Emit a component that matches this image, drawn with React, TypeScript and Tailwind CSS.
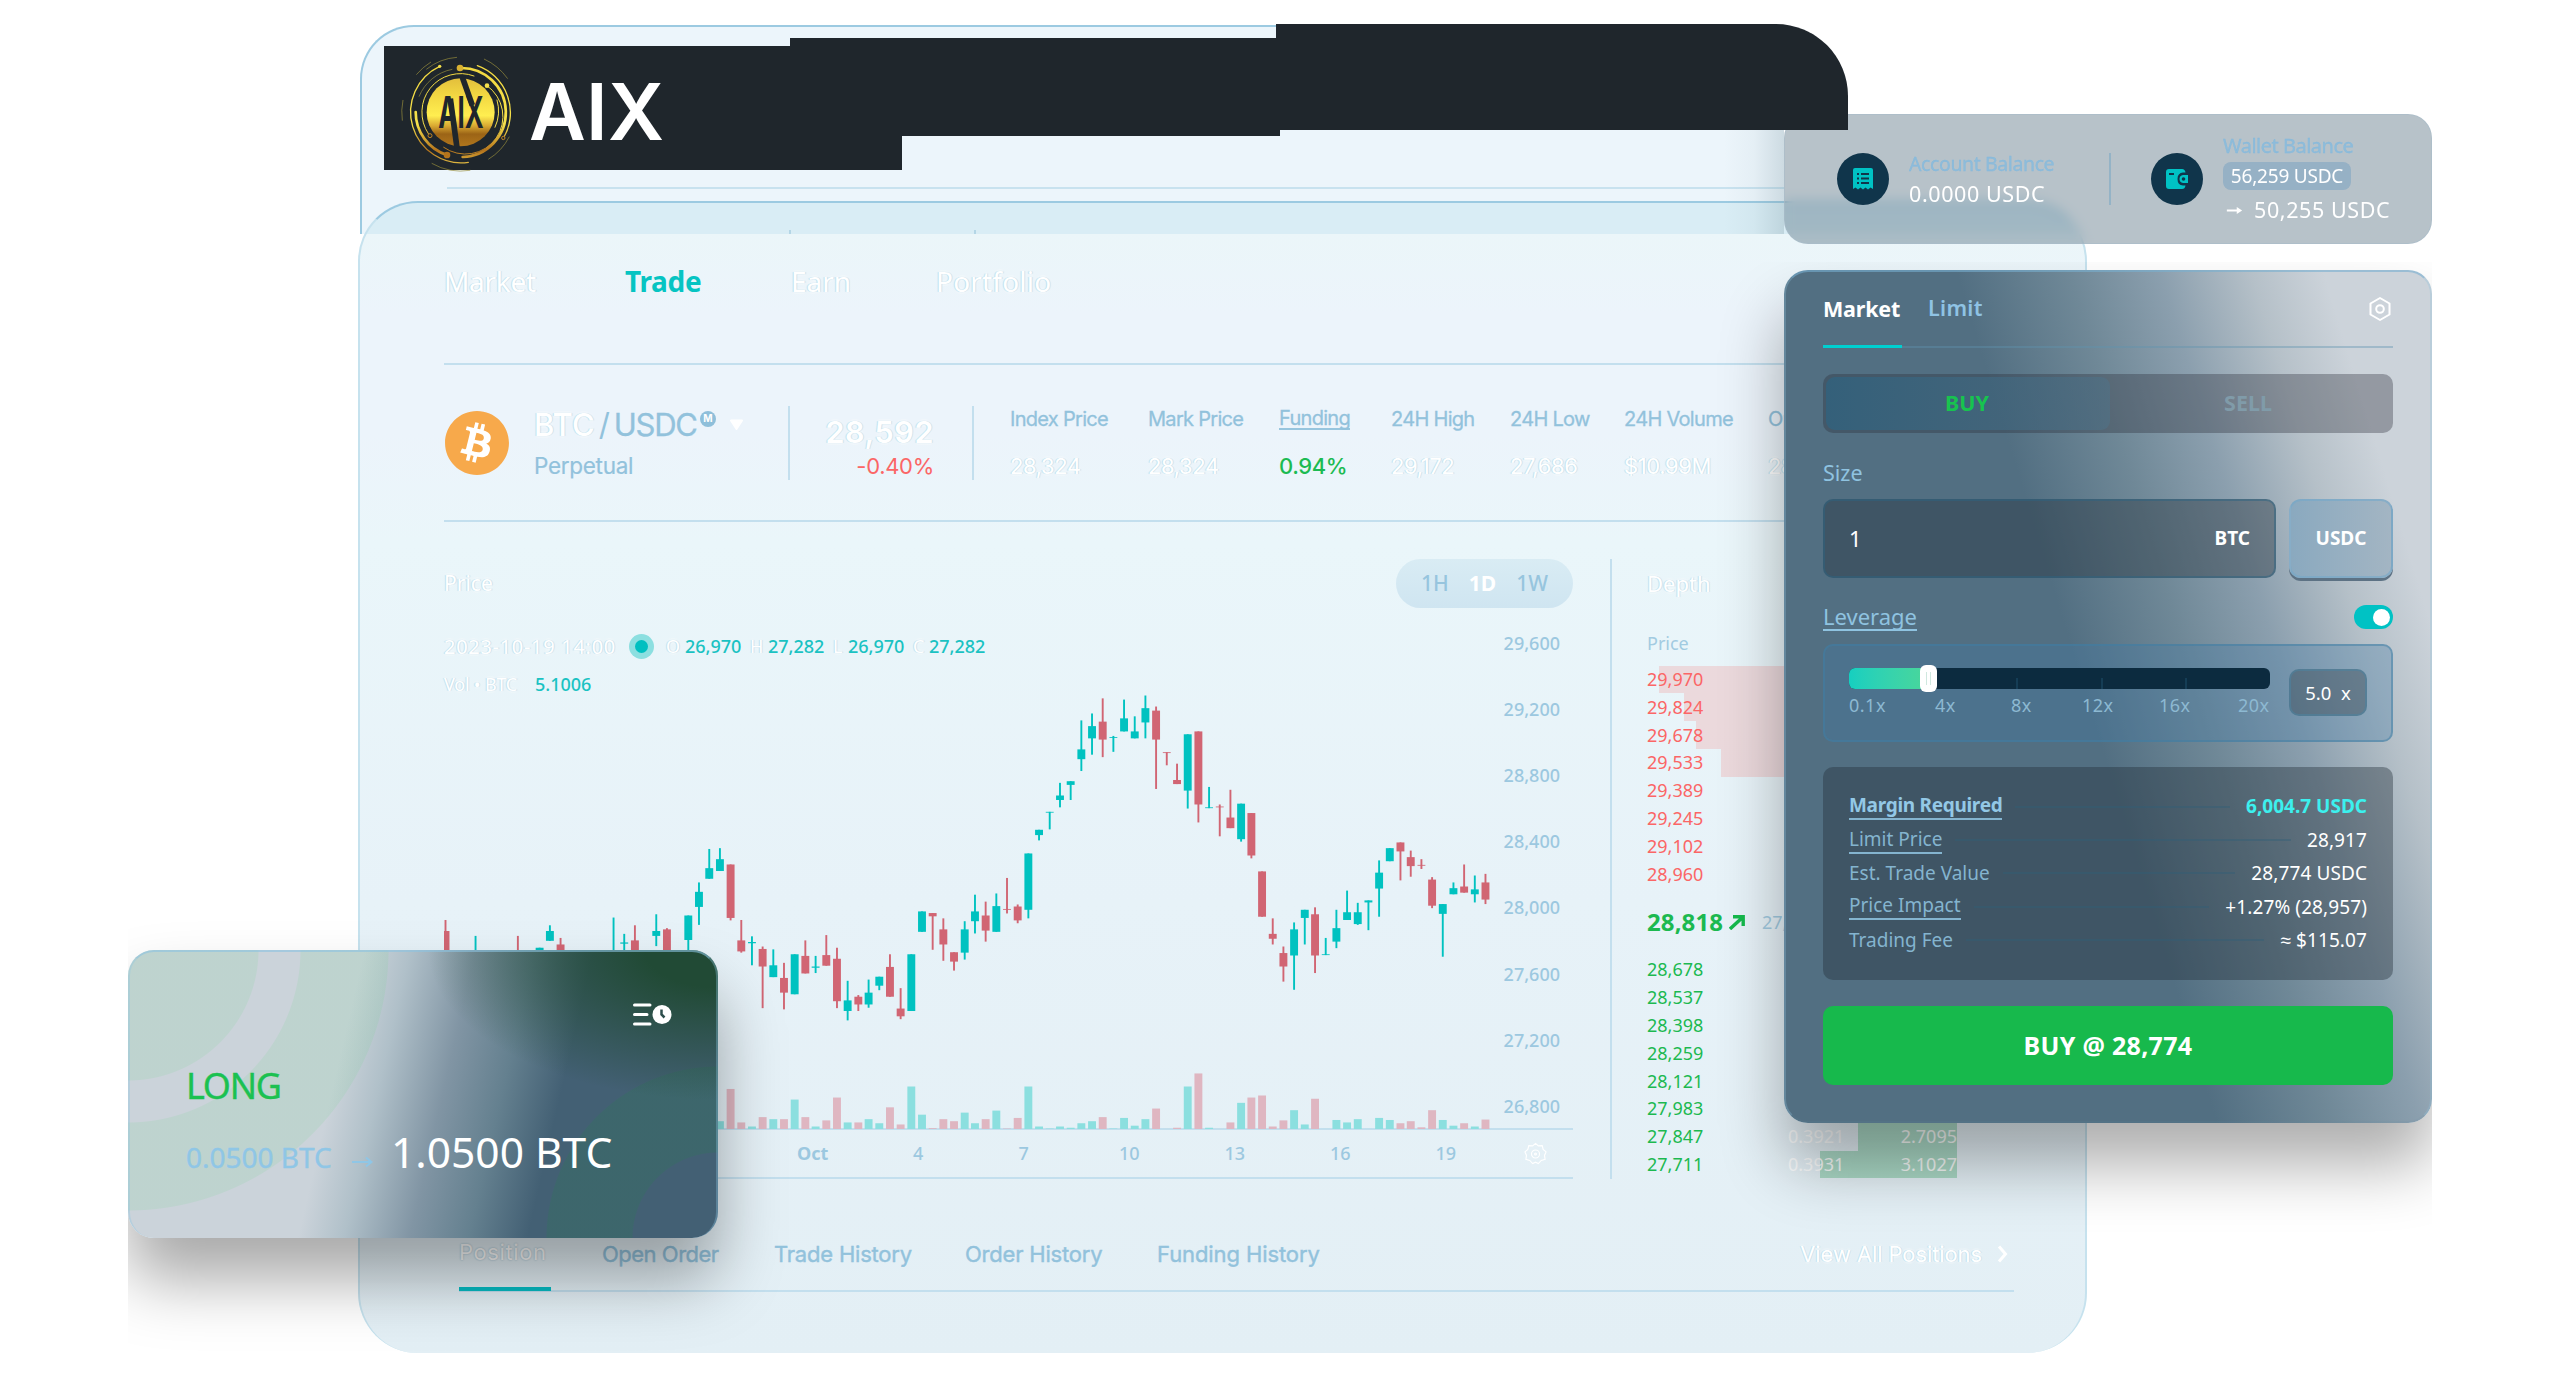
import React from "react";
import { FaBitcoin } from "react-icons/fa";

const ghost = "text-white [text-shadow:1px_0_1px_#c0deeb,-1px_0_1px_#c0deeb,0_0_3px_#ffffff,0_0_3px_#ffffff]";

/* x, high, body top, body bottom, low, rising, volume top */
const CANDLES: [number, number, number, number, number, 0 | 1, number][] = [
  [67, 931, 958, 1040, 1040, 0, 1445], [143, 970, 1008, 1020, 1020, 1, 1445], [250, 970, 1008, 1020, 1020, 0, 1445],
  [305, 999, 999, 1020, 1020, 1, 1445], [331, 944, 958, 982, 982, 1, 1445], [358, 975, 991, 1020, 1020, 0, 1445],
  [492, 925, 1008, 1020, 1020, 1, 1445], [519, 965, 986, 989, 1010, 1, 1445], [546, 944, 981, 1020, 1020, 0, 1445],
  [600, 917, 958, 970, 995, 1, 1445], [627, 951, 954, 1020, 1020, 0, 1445], [681, 920, 920, 980, 1020, 1, 1445],
  [708, 839, 862, 899, 943, 1, 1445], [734, 757, 804, 830, 830, 1, 1445], [761, 755, 782, 811, 811, 1, 1424],
  [788, 795, 795, 926, 932, 0, 1345], [815, 931, 981, 1008, 1011, 0, 1427], [842, 971, 985, 988, 1042, 1, 1437],
  [869, 996, 1002, 1045, 1147, 0, 1414], [896, 1003, 1042, 1071, 1071, 1, 1419], [923, 1036, 1073, 1109, 1150, 0, 1419],
  [950, 1015, 1015, 1113, 1113, 1, 1371], [977, 981, 1019, 1062, 1062, 0, 1414], [1003, 1019, 1045, 1048, 1061, 1, 1437],
  [1030, 968, 1017, 1043, 1043, 0, 1422], [1057, 999, 1026, 1130, 1147, 0, 1366], [1084, 1080, 1128, 1154, 1177, 1, 1427],
  [1111, 1115, 1119, 1138, 1154, 0, 1427], [1137, 1077, 1109, 1138, 1146, 1, 1419], [1164, 1070, 1070, 1092, 1103, 1, 1429],
  [1191, 1015, 1046, 1119, 1119, 0, 1390], [1218, 1098, 1148, 1167, 1174, 0, 1432], [1245, 1015, 1015, 1154, 1154, 1, 1339],
  [1272, 910, 910, 960, 960, 1, 1408], [1299, 914, 914, 922, 1004, 0, 1441], [1326, 927, 954, 991, 1031, 0, 1419],
  [1353, 1010, 1010, 1033, 1055, 0, 1424], [1380, 934, 954, 1011, 1028, 1, 1403], [1406, 869, 910, 934, 964, 1, 1429],
  [1433, 886, 920, 957, 984, 0, 1419], [1460, 866, 897, 960, 960, 1, 1398], [1487, 828, 904, 906, 915, 0, 1442],
  [1514, 893, 898, 932, 939, 0, 1416], [1541, 768, 768, 906, 927, 1, 1339], [1568, 710, 710, 723, 736, 1, 1437],
  [1595, 666, 666, 668, 709, 1, 1442], [1621, 595, 626, 637, 655, 1, 1437], [1648, 591, 591, 600, 637, 1, 1440],
  [1675, 442, 513, 537, 566, 1, 1429], [1702, 425, 456, 486, 526, 1, 1424], [1729, 388, 445, 489, 532, 0, 1414],
  [1756, 480, 483, 485, 519, 1, 1442], [1783, 391, 437, 469, 469, 1, 1416], [1810, 432, 469, 486, 486, 1, 1435],
  [1837, 381, 412, 447, 486, 1, 1419], [1864, 408, 418, 489, 610, 0, 1393], [1891, 520, 520, 522, 552, 0, 1443],
  [1917, 548, 588, 598, 598, 0, 1440], [1944, 476, 476, 614, 658, 1, 1339], [1971, 469, 469, 648, 692, 0, 1307],
  [1998, 605, 655, 657, 657, 1, 1440], [2025, 648, 653, 655, 726, 0, 1443], [2052, 612, 680, 706, 706, 0, 1427],
  [2079, 646, 646, 733, 739, 1, 1379], [2105, 669, 669, 773, 780, 0, 1366], [2132, 812, 812, 923, 923, 0, 1361],
  [2159, 927, 965, 977, 991, 0, 1437], [2186, 996, 1012, 1045, 1082, 0, 1422], [2213, 937, 954, 1018, 1102, 1, 1397],
  [2240, 906, 906, 926, 991, 1, 1432], [2266, 900, 917, 1018, 1061, 0, 1369], [2293, 975, 1015, 1017, 1017, 1, 1443],
  [2320, 906, 951, 984, 1000, 1, 1421], [2347, 859, 912, 931, 931, 1, 1427], [2374, 889, 912, 941, 943, 1, 1419],
  [2401, 883, 883, 888, 956, 1, 1443], [2428, 785, 815, 854, 923, 1, 1416], [2455, 755, 755, 787, 787, 1, 1421],
  [2482, 741, 741, 763, 834, 0, 1429], [2508, 761, 777, 799, 825, 0, 1424], [2535, 782, 796, 798, 806, 0, 1439],
  [2562, 826, 832, 896, 902, 0, 1397], [2589, 892, 892, 916, 1021, 1, 1421], [2616, 839, 853, 868, 868, 1, 1435],
  [2643, 795, 849, 864, 864, 0, 1429], [2670, 822, 856, 868, 888, 1, 1437], [2697, 818, 839, 881, 892, 0, 1420],
];

function Candles() {
  return (
    <svg className="absolute left-0 top-0 h-[521px] w-[1055px]" viewBox="63.2 166.6 2668 1276.5" preserveAspectRatio="none">
      {CANDLES.map(([x, hi, top, bot, lo, up, vol]) => (
        <g key={x} fill={up ? "#00c2c0" : "#d16573"}>
          <rect x={x - 2.4} y={hi} width={4.8} height={lo - hi} />
          <rect x={x - 10} y={top} width={20} height={bot - top} />
          <rect x={x - 10} y={vol} width={20} height={1445 - vol} fill={up ? "#8bdfdf" : "#dfb6c1"} />
        </g>
      ))}
    </svg>
  );
}

function Coin() {
  return (
    <svg className="absolute left-[395px] top-[40px] h-[133.3px] w-[120px]" viewBox="0 0 360 400" fill="none">
      <defs>
        <linearGradient id="gold" x1="0" y1="0" x2="0" y2="1">
          <stop offset="0" stopColor="#e3bf3c" />
          <stop offset=".25" stopColor="#f2d742" />
          <stop offset=".55" stopColor="#ffee50" />
          <stop offset=".7" stopColor="#d9a832" />
          <stop offset=".82" stopColor="#9c6416" />
          <stop offset="1" stopColor="#b0761d" />
        </linearGradient>
        <linearGradient id="ring" gradientUnits="userSpaceOnUse" x1="0" y1="60" x2="0" y2="380">
          <stop offset="0" stopColor="#f3d93f" />
          <stop offset=".6" stopColor="#f6e14c" />
          <stop offset=".85" stopColor="#b5741c" />
          <stop offset="1" stopColor="#e9c94a" />
        </linearGradient>
      </defs>
      <circle cx="197" cy="217" r="102" fill="url(#gold)" />
      <g stroke="#1f262c" strokeWidth="17">
        <path d="M202 112 232 196" />
        <path d="M166 176 186 324" />
      </g>
      <text x="130" y="264" textLength="136" lengthAdjust="spacingAndGlyphs" fill="#1f262c" fontFamily="Inter, sans-serif" fontWeight="700" fontSize="132">AIX</text>
      <g stroke="url(#ring)" strokeLinecap="round">
        <path d="M237 108A116 116 0 0 0 100 281" strokeWidth="3" />
        <path d="M276 137A112 112 0 0 1 146 322" strokeWidth="3" />
        <path d="M134 79A152 152 0 0 0 220 367" strokeWidth="4" />
        <path d="M247 77A150 150 0 0 1 325 295" strokeWidth="4" />
        <path d="M195 84A133 133 0 0 1 203 351" strokeWidth="8" />
        <path d="M62 216A135 135 0 0 0 156 345" strokeWidth="8" />
        <path d="M306 180A116 116 0 0 1 300 262" strokeWidth="3" />
      </g>
      <g stroke="#9a8f3c" strokeWidth="2">
        <path d="M94 88A165 165 0 0 1 186 52" />
        <path d="M64 104A175 175 0 0 1 108 66" />
        <path d="M267 57A180 180 0 0 1 338 116" />
        <path d="M24 180A180 180 0 0 0 22 242" />
        <path d="M343 290A170 170 0 0 1 280 358" />
        <path d="M110 370A176 176 0 0 0 226 391" />
        <path d="M72 170A135 135 0 0 1 172 88" />
      </g>
      <circle cx="195" cy="84" r="10" fill="#d9b233" />
      <circle cx="156" cy="345" r="10" fill="#b5741c" />
      <circle cx="134" cy="79" r="5" fill="#f6e14c" />
      <circle cx="276" cy="137" r="7" fill="#f6e14c" />
      <circle cx="105" cy="287" r="6" stroke="#c08425" strokeWidth="3" fill="#1f262c" />
      <circle cx="325" cy="294" r="5" stroke="#c08425" strokeWidth="3" fill="#1f262c" />
    </svg>
  );
}

function Header() {
  return (
    <>
      <div className="absolute left-[384px] top-[46px] h-[124px] w-[518px] bg-[#1f262c]" />
      <div className="absolute left-[790px] top-[38px] h-[98px] w-[490px] bg-[#1f262c]" />
      <div className="absolute left-[1276px] top-[24px] h-[106px] w-[572px] rounded-tr-[72px] bg-[#1f262c]" />
      <Coin />
      <div className="absolute left-[529px] top-[67px] flex h-[88px] items-center font-[Inter] text-[78px] font-semibold tracking-[0.3px] text-white">AIX</div>
    </>
  );
}

function Stat({ label, value, w, tone, under }: { label: string; value: string; w: string; tone?: string; under?: boolean }) {
  return (
    <div className={`${w} flex flex-none flex-col`}>
      <div className="flex h-[47px] items-center text-[20px] tracking-[-0.7px] text-[#92c2dc] [-webkit-text-stroke:0.3px_#92c2dc]">
        <span className={under ? "border-b-2 border-[#97c5de] leading-[20px]" : "leading-[20px]"}>{label}</span>
      </div>
      <div className={`flex h-[47px] items-center text-[22px] tracking-[-0.4px] ${tone ?? ghost}`}>{value}</div>
    </div>
  );
}

function Ticker() {
  return (
    <div className="flex h-[157px] items-center border-b-2 border-[#c3dfee] font-[Inter]">
      <div className="h-[66px] w-[66px] flex-none rounded-full bg-[radial-gradient(circle,white_60%,transparent_62%)]">
        <FaBitcoin className="h-[66px] w-[66px] text-[#f7a94b]" />
      </div>
      <div className="ml-[24px] flex w-[254px] flex-none flex-col">
        <div className="flex h-[47px] items-center pt-[12px] text-[31px] tracking-[-1.2px]">
          <span className={`${ghost} font-medium tracking-[0px]`}>BTC</span>
          <span className="ml-[4px] mr-[5px] text-[#92c2dc]">/</span>
          <span className="text-[#92c2dc] [-webkit-text-stroke:0.3px_#92c2dc]">USDC</span>
          <span className="mb-[13px] ml-[3px] flex h-4 w-4 items-center justify-center rounded-full bg-[#8fbfda] text-[10px] font-bold tracking-normal text-white">M</span>
          <svg className="ml-[13px] h-[12px] w-[15px]" viewBox="0 0 15 12"><path d="M2 1.5H13L7.5 10Z" fill="#fff" stroke="#fff" strokeWidth="2" strokeLinejoin="round" /></svg>
        </div>
        <div className="flex h-[47px] items-center text-[22.5px] tracking-[-0.3px] text-[#92c2dc] [-webkit-text-stroke:0.2px_#92c2dc]">Perpetual</div>
      </div>
      <div className="flex h-[74px] w-[186px] flex-none flex-col items-end justify-center border-x-2 border-[#c3dfee] pr-[38px]">
        <div className={`flex h-[47px] items-center pt-[12px] text-[30.5px] font-semibold tracking-[0.6px] ${ghost}`}>28,592</div>
        <div className="flex h-[47px] items-center text-[22px] tracking-[-0.3px] text-[#fb6666]">-0.40%</div>
      </div>
      <div className="ml-[36px] flex">
        <Stat label="Index Price" value="28,324" w="w-[138px]" />
        <Stat label="Mark Price" value="28,324" w="w-[131px]" />
        <Stat label="Funding" value="0.94%" w="w-[112px]" tone="font-medium text-[#1cbb52]" under />
        <Stat label="24H High" value="29,172" w="w-[119px]" />
        <Stat label="24H Low" value="27,686" w="w-[114px]" />
        <Stat label="24H Volume" value="$10.99M" w="w-[144px]" />
        <Stat label="Open" value="28,10" w="w-[60px]" />
      </div>
    </div>
  );
}

function Chart() {
  const prices = ["29,600", "29,200", "28,800", "28,400", "28,000", "27,600", "27,200", "26,800"];
  return (
    <div className="flex w-[1129px] flex-none flex-col">
      <div className="flex h-[49px] items-center justify-between">
        <span className={`text-[21px] ${ghost}`}>Price</span>
        <div className="flex h-[49px] w-[177px] items-center justify-between rounded-full bg-linear-to-b from-[#d9ecf4] to-[#cfe5f1] pl-[25px] pr-[25px] text-[21px] font-medium text-[#97c5de]">
          <span>1H</span>
          <span className="font-bold text-white">1D</span>
          <span>1W</span>
        </div>
      </div>
      <div className="relative flex h-[522px] justify-between border-b-2 border-[#c3dfee]">
        <Candles />
        <div className="mt-[19px] flex flex-col text-[18px]">
          <div className="flex h-[39px] items-center">
            <span className={`w-[185px] text-[20px] tracking-[0.7px] ${ghost}`}>2023-10-19 14:00</span>
            <span className="flex h-[25px] w-[25px] items-center justify-center rounded-full bg-[#8cdfe0]"><span className="h-[13px] w-[13px] rounded-full bg-[#00bfc0]" /></span>
            {[["O", "26,970", "w-[19px]"], ["H", "27,282", "w-[18px]"], ["L", "26,970", "w-[15px]"], ["C", "27,282", "w-[16px]"]].map(([k, v, w], i) => (
              <span key={k} className={i ? "ml-[9px] flex" : "ml-[12px] flex"}>
                <span className={`${w} ${ghost}`}>{k}</span>
                <span className="w-[56px] font-medium text-[#1ac2c2]">{v}</span>
              </span>
            ))}
          </div>
          <div className="-mt-px flex h-[39px] items-center">
            <span className={`w-[91px] tracking-[-0.2px] ${ghost}`}>Vol • BTC</span>
            <span className="font-medium text-[#1ac2c2]">5.1006</span>
          </div>
        </div>
        <div className="mr-[13px] mt-[2px] flex flex-col text-[18px] font-medium text-[#9cc8e0]">
          {prices.map((p) => (
            <span key={p} className="flex h-[66.2px] flex-none items-center">{p}</span>
          ))}
        </div>
      </div>
      <div className="flex h-[49px] items-center border-b-2 border-[#c3dfee] pl-[316px] text-[18px] font-medium text-[#9cc8e0]">
        {["Oct", "4", "7", "10", "13", "16", "19"].map((d) => (
          <span key={d} className={d === "Oct" ? "w-[105.5px] text-center font-bold" : "w-[105.5px] text-center"}>{d}</span>
        ))}
        <svg className="ml-[25px] h-[23px] w-[23px]" viewBox="0 0 24 24" fill="none" stroke="#fff" strokeWidth="1.2">
          <path d="M12 1.5l3 2.6 4-.3 1 3.9 3 2.6-1.6 3.7.6 4-4 1.2L15 22.5l-3-1.5-3 1.5-3-3.3-4-1.2.6-4L1 10.3l3-2.6 1-3.9 4 .3z" />
          <circle cx="12" cy="12.5" r="4.2" />
          <circle cx="12" cy="12.5" r="1" />
        </svg>
      </div>
    </div>
  );
}

function Depth() {
  const asks = [["29,970", 298], ["29,824", 273], ["29,678", 261], ["29,533", 236], ["29,389", 0], ["29,245", 0], ["29,102", 0], ["28,960", 0]] as const;
  const bids = [["28,678", 0], ["28,537", 0], ["28,398", 0], ["28,259", 0], ["28,121", 0], ["27,983", 0], ["27,847", 99], ["27,711", 137]] as const;
  return (
    <div className="ml-[35px] flex w-[310px] flex-none flex-col text-[18px]">
      <div className={`flex h-[49px] items-center text-[22px] ${ghost}`}>Depth</div>
      <div className="mt-[18px] flex h-[39.6px] items-center pb-[4px] text-[#a2cbe1]">Price</div>
      {asks.map(([p, w]) => (
        <div key={p} className="relative flex h-[27.84px] items-center text-[#fb6666]">
          <span className="absolute right-0 top-0 h-full bg-[#f2a5a5]/35" style={{ width: w }} />
          <span className="relative">{p}</span>
        </div>
      ))}
      <div className="flex h-[67.6px] items-center text-[#1cb950]">
        <span className="w-[82px] text-[24px] font-bold tracking-[0.1px]">28,818</span>
        <svg className="h-[15px] w-[16px]" viewBox="0 0 16 15" fill="none" stroke="#14b94c" strokeWidth="3.4"><path d="M1 14 14 2M4 1.8H14.2V11" /></svg>
        <span className="ml-[17px] text-[#a2cbe1]">27,819</span>
      </div>
      {bids.map(([p, w]) => (
        <div key={p} className="relative flex h-[27.84px] items-center text-[#1cb950]">
          <span className="absolute right-0 top-0 h-full bg-[#3fae6c]/35" style={{ width: w }} />
          <span className="relative w-[141px]">{p}</span>
          {w > 0 && (
            <span className="relative flex flex-1 justify-between text-white/90">
              <span>{p === "27,847" ? "0.3921" : "0.3931"}</span>
              <span>{p === "27,847" ? "2.7095" : "3.1027"}</span>
            </span>
          )}
        </div>
      ))}
    </div>
  );
}

function Positions() {
  return (
    <div className="ml-[15px] flex h-[113px] items-end border-b-2 border-[#c3dfee] font-[Inter] text-[22px] text-[#92c2dc]">
      <div className="-mb-[1px] mr-[51px] flex h-[75px] w-[92px] items-center border-b-4 border-[#06bcc4] tracking-[0.6px] text-white">
        <span className="pt-[1px] [text-shadow:0_0_2px_#8fb4c6]">Position</span>
      </div>
      <span className="mb-[19px] w-[172px] leading-[34px] tracking-[-0.5px] [-webkit-text-stroke:0.4px_#92c2dc]">Open Order</span>
      <span className="mb-[19px] w-[191px] leading-[34px] tracking-[-0.2px] [-webkit-text-stroke:0.4px_#92c2dc]">Trade History</span>
      <span className="mb-[19px] w-[192px] leading-[34px] tracking-[-0.2px] [-webkit-text-stroke:0.4px_#92c2dc]">Order History</span>
      <span className="mb-[19px] leading-[34px] tracking-[-0.1px] [-webkit-text-stroke:0.4px_#92c2dc]">Funding History</span>
      <div className={`mb-[19px] ml-auto mr-[6px] flex items-center leading-[34px] tracking-[-0.1px] ${ghost}`}>
        View All Positions
        <svg className="ml-[15px] h-[18px] w-[11px]" viewBox="0 0 11 18" fill="none" stroke="#fff" strokeWidth="3"><path d="M2 1.5 8.5 9 2 16.5" /></svg>
      </div>
    </div>
  );
}

function Workspace() {
  return (
    <>
      <div className="absolute left-[360px] top-[25px] h-[209px] w-[1424px] rounded-tl-[54px] border-l-2 border-t-2 border-[#9ccae1] bg-[#ecf5fb]">
        <div className="ml-[85px] mt-[160px] h-[2px] bg-[#c8e2ef]" />
      </div>
      <div className="absolute left-[358px] top-[201px] flex h-[1152px] w-[1729px] flex-col rounded-[60px] border-x-2 border-t-2 border-x-[#c6e2ee] border-t-[#9ccae1] bg-[linear-gradient(180deg,#d9edf5_0,#d9edf5_31px,#ebf6f9_31px,#ecf4fb_110px,#ecf4fb_230px,#eaf6fa_340px,#e7f2f8_700px,#e3eff5_100%)] pl-[84px] pr-[71px]">
        <div className="flex h-[31px] flex-none items-end">
          <span className="ml-[345px] h-[4px] w-[2px] bg-[#b4d6e6]" />
          <span className="ml-[183px] h-[4px] w-[2px] bg-[#b4d6e6]" />
        </div>
        <div className="flex h-[131px] flex-none items-center border-b-2 border-[#c3dfee] pb-[36px] text-[28px]">
          <span className={`w-[181px] tracking-[-0.3px] ${ghost}`}>Market</span>
          <span className="w-[166px] font-bold tracking-[-0.3px] text-[#06c4c2]">Trade</span>
          <span className={`w-[145px] ${ghost}`}>Earn</span>
          <span className={`tracking-[0.2px] ${ghost}`}>Portfolio</span>
        </div>
        <div className="flex-none"><Ticker /></div>
        <div className="flex h-[657px] flex-none pt-[37px]">
          <Chart />
          <div className="ml-[37px] h-[620px] w-[2px] bg-[#c3dfee]" />
          <Depth />
        </div>
        <Positions />
      </div>
    </>
  );
}

function Balances() {
  return (
    <>
      <div className="absolute left-[1724px] top-[130px] h-[104px] w-[60px] bg-linear-to-r from-transparent via-[#6f8c96]/6 to-[#6f8c96]/25" />
      <div className="absolute left-[1784px] top-[114px] flex h-[130px] w-[648px] items-center rounded-[24px] border border-[#a9bdca]/60 bg-[#4b6678]/40 backdrop-blur-[6px]">
        <div className="ml-[52px] flex h-[52px] w-[52px] flex-none items-center justify-center rounded-full bg-[#10354b]">
          <svg className="h-[24px] w-[22px]" viewBox="0 0 22 24">
            <path d="M3 1H19Q21 1 21 3V22L18.5 20.5 16 22.5 13.5 20.5 11 22.5 8.5 20.5 6 22.5 3.5 20.5 1 22V3Q1 1 3 1Z" fill="#00c2c4" />
            <path d="M5 7H7M9 7H17M5 11.5H7M9 11.5H17M5 16H7M9 16H17" stroke="#10354b" strokeWidth="1.8" />
          </svg>
        </div>
        <div className="ml-[20px] flex w-[200px] flex-none flex-col text-[19.5px] text-[#8dbcdb]">
          <span className="h-[31px] leading-[29px] tracking-[-0.4px] [-webkit-text-stroke:0.3px_#84b8da]">Account Balance</span>
          <span className="h-[30px] text-[21.5px] leading-[27px] tracking-[0.6px] text-white">0.0000 USDC</span>
        </div>
        <div className="h-[52px] w-[2px] flex-none bg-[#94b3c6]" />
        <div className="ml-[40px] flex h-[52px] w-[52px] flex-none items-center justify-center rounded-full bg-[#10354b]">
          <svg className="h-[22px] w-[26px]" viewBox="0 0 26 22">
            <path d="M5 1H18Q21 1 21.5 4.5H19Q13.5 5 13.5 11T19 17.5H21.5Q21 21 18 21H5Q2 21 2 18V4Q2 1 5 1Z" fill="#00c2c4" />
            <path d="M5 6H10" stroke="#10354b" strokeWidth="2" />
            <path d="M19 7H24V15H19Q15.5 14.5 15.5 11T19 7Z" fill="#00c2c4" />
            <circle cx="19.5" cy="11" r="1.8" fill="#10354b" />
          </svg>
        </div>
        <div className="ml-[20px] flex flex-col text-[20px]">
          <span className="h-[30px] leading-[28px] tracking-[-0.5px] text-[#8dbcdb] [-webkit-text-stroke:0.3px_#84b8da]">Wallet Balance</span>
          <span className="flex h-[28px] w-[128px] items-center justify-center rounded-lg bg-[#96b1c5] text-[19px] tracking-[-0.2px] text-white">56,259 USDC</span>
          <span className="flex h-[36px] items-center pt-1 text-[21.5px] tracking-[0.6px] text-white">
            <svg className="ml-[3px] mr-[11px] h-[9px] w-[17px]" viewBox="0 0 17 10" fill="#fff"><path d="M0 4H11V1L17 5 11 9V6H0Z" /></svg>
            50,255 USDC
          </span>
        </div>
      </div>
    </>
  );
}

function Line({ k, v, u, strong }: { k: string; v: string; u?: boolean; strong?: boolean }) {
  return (
    <div className="flex h-[33.4px] items-center">
      <span className={`${u ? "border-b-2 border-[#84b4cf]" : ""} ${strong ? "font-bold tracking-[-0.3px] text-[#93c8e6]" : "text-[#84b4cf]"} leading-[25px]`}>{k}</span>
      <span className="ml-[13px] mr-[16px] h-[2px] flex-1 bg-[#2f5f78]/40" />
      <span className={strong ? "font-bold text-[#3cf0ee]" : "tracking-[0.1px] text-white"}>{v}</span>
    </div>
  );
}

function OrderPanel() {
  return (
    <div className="pointer-events-none absolute left-[1600px] top-[262px] h-[1090px] w-[832px] overflow-hidden">
      <div className="ml-[184px] mt-[8px] flex h-[853px] w-[648px] flex-col rounded-[24px] border-2 border-x-[#8fc1dc]/30 border-b-[#6d93aa]/10 border-t-[#79b0d0]/60 bg-[linear-gradient(73deg,#526f82_47.6%,#6f8897_60%,#8b9fae_70%,#b5c0c8_80%,#ccd3da_88%)] bg-origin-border px-[37px] shadow-[0_42px_64px_rgba(0,0,0,0.32)]">
        <div className="flex h-[76px] flex-none items-center border-b-2 border-[#5f93b0]/40 text-[21.5px]">
          <div className="relative -mb-[2px] flex h-[76px] w-[79px] items-center border-b-[3px] border-[#00cfd0] font-bold tracking-[-0.2px] text-white">
            <span className="mt-[1px]">Market</span>
          </div>
          <span className="-mt-[1px] ml-[26px] font-semibold tracking-[0.3px] text-[#8fc3e4]">Limit</span>
          <svg className="ml-auto h-[26px] w-[26px]" viewBox="0 0 26 26" fill="none" stroke="#fff" strokeWidth="2">
            <path d="M13 2 22.5 7.5V18.5L13 24 3.5 18.5V7.5Z" strokeLinejoin="round" />
            <circle cx="13" cy="13" r="3.8" />
          </svg>
        </div>
        <div className="mt-[26px] flex h-[59px] flex-none rounded-[10px] bg-[#2b2f38]/35 p-[3px] text-[21.5px] font-bold">
          <div className="flex w-[284px] items-center justify-center rounded-[9px] bg-linear-to-r from-[#2f6380]/75 to-[#4f7389]/55 pr-[2px] text-[#17c34f]">BUY</div>
          <div className="flex flex-1 items-center justify-center pr-[4px] text-[#809ba9]">SELL</div>
        </div>
        <div className="mt-[23px] flex h-[34px] flex-none items-center text-[21.5px] text-[#8fc3e0]">Size</div>
        <div className="mt-[9px] flex h-[79px] flex-none gap-[13px] text-white">
          <div className="flex w-[453px] items-center justify-between rounded-[10px] border-2 border-[#2b6482]/50 bg-[#22303a]/40 pl-[24px] pr-[24px]">
            <span className="text-[22px]">1</span>
            <span className="text-[19px] font-bold">BTC</span>
          </div>
          <div className="flex flex-1 items-center justify-center rounded-[12px] border-2 border-[#74a9c9]/60 bg-linear-to-r from-[#8aa9bf] to-[#a3b5c3] text-[19px] font-bold shadow-[0_3px_0_#5d7284]">USDC</div>
        </div>
        <div className="mt-[22px] flex h-[34px] flex-none items-center justify-between">
          <span className="border-b-2 border-[#8fc3e0] text-[22px] leading-[25px] text-[#8fc3e0]">Leverage</span>
          <span className="flex h-[24px] w-[39px] items-center justify-end rounded-full bg-[#00c2c4] pr-[3px]"><span className="h-[17px] w-[17px] rounded-full bg-white" /></span>
        </div>
        <div className="mt-[10px] flex h-[98px] flex-none rounded-[10px] border-2 border-[#3f80a6]/50 bg-[#4278a5]/32 pl-[24px] pr-[24px] pt-[22px]">
          <div className="w-[421px]">
            <div className="relative flex h-[21px] items-end justify-evenly rounded-[6px] bg-[#0c2b3f]">
              {[1, 2, 3, 4].map((n) => <span key={n} className="h-[11px] w-[2px] bg-[#153d55]" />)}
              <span className="absolute left-0 top-0 h-[21px] w-[76px] rounded-l-[6px] bg-linear-to-r from-[#15cfc0] to-[#48d69b]" />
              <span className="absolute -top-[3px] left-[71px] flex h-[27px] w-[17px] items-center justify-center gap-[3px] rounded-[6px] bg-white"><span className="h-[13px] w-px bg-[#cfe8df]" /><span className="h-[13px] w-px bg-[#cfe8df]" /></span>
            </div>
            <div className="mt-[2px] flex text-[18px] leading-[28px] tracking-[0.5px] text-[#8db9d2]">
              <span className="w-[86px]">0.1x</span>
              <span className="w-[76px]">4x</span>
              <span className="w-[71px]">8x</span>
              <span className="w-[77px]">12x</span>
              <span className="w-[79px]">16x</span>
              <span>20x</span>
            </div>
          </div>
          <div className="ml-[19px] mt-px flex h-[47px] w-[78px] items-center justify-center rounded-[10px] border-2 border-[#4d829f]/60 bg-[#3a4a54]/45 text-[18.5px] text-white">5.0 &nbsp;x</div>
        </div>
        <div className="mt-[25px] flex h-[213px] flex-none flex-col rounded-[10px] bg-[#22303a]/40 px-[26px] pt-[23px] text-[19px]">
          <Line k="Margin Required" v="6,004.7 USDC" u strong />
          <Line k="Limit Price" v="28,917" u />
          <Line k="Est. Trade Value" v="28,774 USDC" />
          <Line k="Price Impact" v="+1.27% (28,957)" u />
          <Line k="Trading Fee" v="≈ $115.07" />
        </div>
        <div className="mt-[26px] flex h-[79px] flex-none items-center justify-center rounded-[10px] bg-[#17b94c] text-[25px] font-bold tracking-[0.3px] text-white">BUY @ 28,774</div>
      </div>
    </div>
  );
}

function PositionCard() {
  return (
    <div className="absolute left-[128px] top-[900px] h-[453px] w-[800px] overflow-hidden">
      <div className="relative mt-[50px] flex h-[288px] w-[590px] flex-col rounded-[26px] bg-[radial-gradient(290px_150px_at_590px_0px,#214a35_25%,transparent),radial-gradient(circle_at_590px_288px,transparent_85px,#2f75594d_86px,#2f75594d_171px,transparent_172px),radial-gradient(circle_at_0_0,#6fd48a24_130px,transparent_131px,transparent_172px,#6fd48a24_173px,#6fd48a24_260px,transparent_261px),linear-gradient(103deg,#cbd3da_36%,#b0c0c9_43%,#8195a4_53%,#64808f_62%,#436074_71%)] pl-[58px] shadow-[0_42px_64px_rgba(0,0,0,0.34)]">
        <div className="pointer-events-none absolute inset-0 rounded-[26px] border-2 border-b-0 border-x-[#8cc4e2]/35 border-t-[#8cc4e2]/60" />
        <div className="flex h-[104px] items-end justify-end pb-[28px] pr-[46px]">
          <svg className="h-[23px] w-[39px]" viewBox="0 0 39 23" fill="none">
            <path d="M1.5 2H17M1.5 11.5H14M1.5 21H17" stroke="#fff" strokeWidth="3" strokeLinecap="round" />
            <circle cx="29" cy="11.5" r="9.5" fill="#fff" />
            <path d="M28.5 6.5V11.5L31.5 14.5" stroke="#2d4e4c" strokeWidth="2.5" />
          </svg>
        </div>
        <div className="flex h-[64px] items-center text-[36px] tracking-[-1.3px] text-[#1bc151] [-webkit-text-stroke:0.4px_#1bc151]">LONG</div>
        <div className="flex h-[68px] items-baseline text-[28px] text-[#8fc6e6]">
          <span className="w-[166px] [-webkit-text-stroke:0.4px_#8fc6e6]">0.0500 BTC</span>
          <svg className="mb-[3px] h-[12px] w-[21px]" viewBox="0 0 21 12" fill="none" stroke="#8fc6e6" strokeWidth="2"><path d="M0 6H19M14 1.5 19.5 6 14 10.5" /></svg>
          <span className="ml-[18px] text-[42.5px] leading-[68px] text-white">1.0500 BTC</span>
        </div>
      </div>
    </div>
  );
}

export default function App() {
  return (
    <div className="relative h-[1386px] w-[2560px] overflow-hidden whitespace-nowrap bg-white font-['Noto_Sans',sans-serif]">
      <Workspace />
      <Balances />
      <OrderPanel />
      <PositionCard />
      <Header />
    </div>
  );
}
